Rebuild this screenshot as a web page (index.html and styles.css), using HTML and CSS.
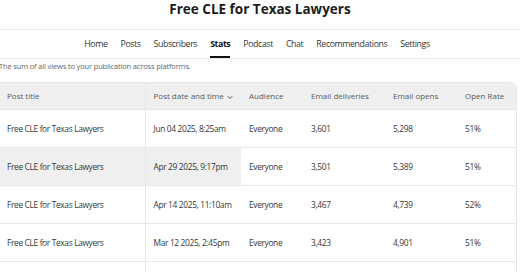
FILE: index.html
```html
<!DOCTYPE html>
<html lang="en">
	<head>
		<meta charset="UTF-8" />
		<meta name="viewport" content="width=device-width, initial-scale=1.0" />
		<title>Stats</title>
		<link rel="stylesheet" href="styles.css">
	</head>
	<body>
		<div class="header">
			<h1>Free CLE for Texas Lawyers</h1>
		</div>
		<nav class="nav">
			<a href="#">Home</a>
			<a href="#">Posts</a>
			<a href="#">Subscribers</a>
			<a href="#" class="active">Stats</a>
			<a href="#">Podcast</a>
			<a href="#">Chat</a>
			<a href="#">Recommendations</a>
			<a href="#">Settings</a>
		</nav>
		<p class="subtitle">The sum of all views to your publication across platforms.</p>
		<div class="table-wrap">
			<table class="posts">
				<colgroup>
					<col class="c-title" />
					<col class="c-date" />
					<col class="c-aud" />
					<col class="c-del" />
					<col class="c-open" />
					<col class="c-rate" />
				</colgroup>
				<thead>
					<tr>
						<th class="sticky">Post title</th>
						<th>Post date and time
							<svg class="caret" width="6" height="5" viewBox="0 0 6 5"><path d="M0.8 1.2 L3 3.4 L5.2 1.2" fill="none" stroke="#555" stroke-width="1" /></svg>
						</th>
						<th>Audience</th>
						<th>Email deliveries</th>
						<th>Email opens</th>
						<th>Open Rate</th>
					</tr>
				</thead>
				<tbody>
					<tr>
						<td class="sticky">Free CLE for Texas Lawyers</td>
						<td>Jun 04 2025, 8:25am</td>
						<td>Everyone</td>
						<td>3,601</td>
						<td>5,298</td>
						<td>51%</td>
					</tr>
					<tr class="hover">
						<td class="sticky">Free CLE for Texas Lawyers</td>
						<td>Apr 29 2025, 9:17pm</td>
						<td>Everyone</td>
						<td>3,501</td>
						<td>5,389</td>
						<td>51%</td>
					</tr>
					<tr>
						<td class="sticky">Free CLE for Texas Lawyers</td>
						<td>Apr 14 2025, 11:10am</td>
						<td>Everyone</td>
						<td>3,467</td>
						<td>4,739</td>
						<td>52%</td>
					</tr>
					<tr>
						<td class="sticky">Free CLE for Texas Lawyers</td>
						<td>Mar 12 2025, 2:45pm</td>
						<td>Everyone</td>
						<td>3,423</td>
						<td>4,901</td>
						<td>51%</td>
					</tr>
					<tr>
						<td class="sticky"></td>
						<td></td>
						<td></td>
						<td></td>
						<td></td>
						<td></td>
					</tr>
				</tbody>
			</table>
		</div>
	</body>
</html>
```

FILE: styles.css
```css
* {
	box-sizing: border-box;
}
body {
	margin: 0;
	padding: 0;
	font-family: "Open Sans", "Noto Sans", sans-serif;
	background-color: #fff;
	color: #363737;
	overflow: hidden;
}
.header {
	height: 29px;
	display: flex;
	justify-content: center;
	align-items: flex-start;
}
.header h1 {
	margin: 0;
	font-size: 13.5px;
	line-height: 18px;
	font-weight: 700;
	color: #1c1c1c;
}
.nav {
	height: 30px;
	display: flex;
	justify-content: center;
	align-items: stretch;
	gap: 13px;
	border-top: 1px solid #ececec;
	border-bottom: 1px solid #ececec;
	padding-right: 6px;
}
.nav a {
	display: flex;
	align-items: center;
	font-size: 8.8px;
	letter-spacing: -0.4px;
	color: #363737;
	text-decoration: none;
	border-bottom: 2px solid transparent;
	padding-top: 2px;
}
.nav a.active {
	font-weight: 700;
	color: #111;
	border-bottom-color: #111;
}
.subtitle {
	margin: 1px 0 0 -1px;
	height: 18px;
	font-size: 7.5px;
	letter-spacing: -0.15px;
	line-height: 12px;
	color: #666;
}
.table-wrap {
	margin: 4px 3px 0 -7px;
	border: 1px solid #e6e6e6;
	border-radius: 6px;
	overflow: hidden;
}
.posts {
	width: 100%;
	border-collapse: collapse;
	table-layout: fixed;
}
.c-title { width: 151px; }
.c-date { width: 96px; }
.c-aud { width: 62px; }
.c-del { width: 82px; }
.c-open { width: 72px; }
.c-rate { width: auto; }
.posts th {
	height: 26px;
	background-color: #efefef;
	text-align: left;
	font-weight: 400;
	font-size: 8px;
	color: #5a5a5a;
	padding: 0 8px;
	white-space: nowrap;
}
.posts td {
	height: 38px;
	font-size: 8.4px;
	letter-spacing: -0.35px;
	padding: 0 8px;
	border-top: 1px solid #e6e6e6;
	white-space: nowrap;
}
.posts .sticky {
	padding-left: 13px;
	border-right: 1px solid #e6e6e6;
}
.caret {
	vertical-align: middle;
	margin-left: 1px;
}
.posts tr.hover td:nth-child(-n+2) {
	background-color: #efefef;
}
```
